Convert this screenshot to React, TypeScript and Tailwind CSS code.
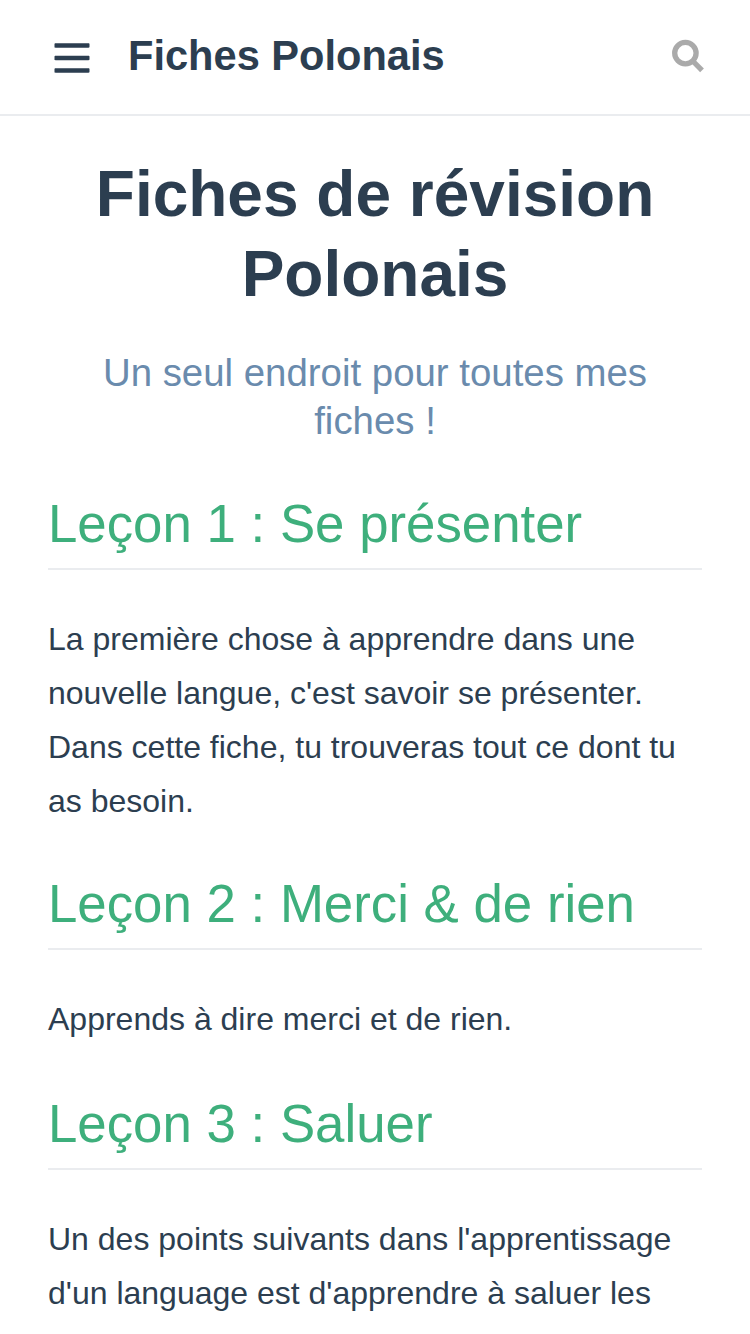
const lessons = [
  {
    title: "Leçon 1 : Se présenter",
    text: "La première chose à apprendre dans une nouvelle langue, c'est savoir se présenter. Dans cette fiche, tu trouveras tout ce dont tu as besoin.",
    spacing: "pt-[46px]",
  },
  { title: "Leçon 2 : Merci & de rien", text: "Apprends à dire merci et de rien.", spacing: "pt-[44px]" },
  {
    title: "Leçon 3 : Saluer",
    text: "Un des points suivants dans l'apprentissage d'un language est d'apprendre à saluer les",
    spacing: "pt-[46px]",
  },
];

function MenuIcon() {
  return (
    <svg className="h-10 w-10" viewBox="0 0 448 512" fill="currentColor" aria-hidden="true">
      <path d="M436 124H12c-6.627 0-12-5.373-12-12V80c0-6.627 5.373-12 12-12h424c6.627 0 12 5.373 12 12v32c0 6.627-5.373 12-12 12zm0 160H12c-6.627 0-12-5.373-12-12v-32c0-6.627 5.373-12 12-12h424c6.627 0 12 5.373 12 12v32c0 6.627-5.373 12-12 12zm0 160H12c-6.627 0-12-5.373-12-12v-32c0-6.627 5.373-12 12-12h424c6.627 0 12 5.373 12 12v32c0 6.627-5.373 12-12 12z" />
    </svg>
  );
}

function SearchIcon() {
  return (
    <svg className="h-8 w-8 overflow-visible" viewBox="0 0 32 32" fill="none" stroke="currentColor" aria-hidden="true">
      <circle cx="13.4" cy="13.1" r="10.7" strokeWidth="5.3" />
      <path d="M20.5 20.7L30 30.4" strokeWidth="5.2" />
    </svg>
  );
}

export default function App() {
  return (
    <div className="h-[1334px] w-[750px] overflow-hidden bg-white font-['Liberation_Sans',Arial,sans-serif] text-[#2c3e50] antialiased">
      <header className="flex h-[116px] items-start border-b-2 border-[#eaecef] pr-[46px] pl-[52px]">
        <button className="mt-[38px]" aria-label="Menu">
          <MenuIcon />
        </button>
        <span className="mt-[32px] ml-9 text-[41.6px] leading-[48px] font-semibold">Fiches Polonais</span>
        <button className="mt-10 ml-auto text-[#aaaaaa]" aria-label="Rechercher">
          <SearchIcon />
        </button>
      </header>
      <main className="px-12">
        <h1 className="mt-[38px] text-center text-[64px] leading-20 font-semibold">
          Fiches de révision
          <br />
          Polonais
        </h1>
        <p className="mt-[35px] mb-px text-center text-[38.4px] leading-12 text-[#6a8bad]">
          Un seul endroit pour toutes mes
          <br />
          fiches !
        </p>
        {lessons.map((lesson) => (
          <section key={lesson.title} className={lesson.spacing}>
            <h2 className="h-[78px] border-b-2 border-[#eaecef] text-[52.8px] leading-[64px] text-[#3eaf7c]">
              {lesson.title}
            </h2>
            <p className="mt-[42px] text-[32px] leading-[54px]">{lesson.text}</p>
          </section>
        ))}
      </main>
    </div>
  );
}
